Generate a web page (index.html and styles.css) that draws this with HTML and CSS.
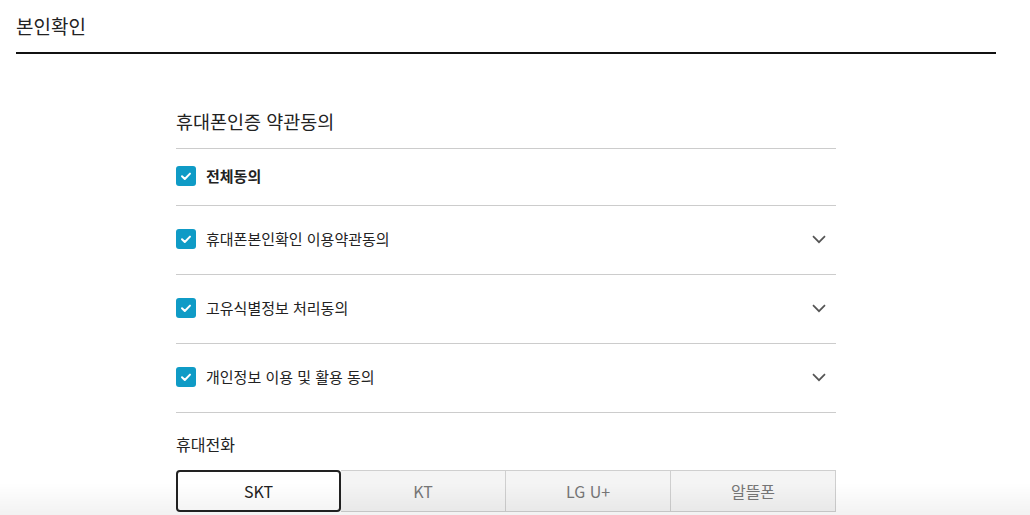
FILE: index.html
```html
<!DOCTYPE html>
<html lang="ko">
<head>
<meta charset="utf-8">
<link rel="stylesheet" href="styles.css">
</head>
<body>
<header class="page-head">
  <h1 class="page-title">본인확인</h1>
</header>
<main class="content">
  <h2 class="section-title">휴대폰인증 약관동의</h2>
  <div class="agree-all">
    <span class="check"><svg viewBox="0 0 20 20" width="20" height="20"><path d="M6 10.2l2.8 2.8 5.2-5.4" fill="none" stroke="#fff" stroke-width="2" stroke-linecap="round" stroke-linejoin="round"/></svg></span>
    <span class="agree-all-label">전체동의</span>
  </div>
  <div class="agree-row">
    <span class="check"><svg viewBox="0 0 20 20" width="20" height="20"><path d="M6 10.2l2.8 2.8 5.2-5.4" fill="none" stroke="#fff" stroke-width="2" stroke-linecap="round" stroke-linejoin="round"/></svg></span>
    <span class="agree-label">휴대폰본인확인 이용약관동의</span>
    <svg class="chev" viewBox="0 0 14 9" width="14" height="9"><path d="M1 1.2l6 6 6-6" fill="none" stroke="#555" stroke-width="1.7"/></svg>
  </div>
  <div class="agree-row">
    <span class="check"><svg viewBox="0 0 20 20" width="20" height="20"><path d="M6 10.2l2.8 2.8 5.2-5.4" fill="none" stroke="#fff" stroke-width="2" stroke-linecap="round" stroke-linejoin="round"/></svg></span>
    <span class="agree-label">고유식별정보 처리동의</span>
    <svg class="chev" viewBox="0 0 14 9" width="14" height="9"><path d="M1 1.2l6 6 6-6" fill="none" stroke="#555" stroke-width="1.7"/></svg>
  </div>
  <div class="agree-row">
    <span class="check"><svg viewBox="0 0 20 20" width="20" height="20"><path d="M6 10.2l2.8 2.8 5.2-5.4" fill="none" stroke="#fff" stroke-width="2" stroke-linecap="round" stroke-linejoin="round"/></svg></span>
    <span class="agree-label">개인정보 이용 및 활용 동의</span>
    <svg class="chev" viewBox="0 0 14 9" width="14" height="9"><path d="M1 1.2l6 6 6-6" fill="none" stroke="#555" stroke-width="1.7"/></svg>
  </div>
  <h3 class="field-label">휴대전화</h3>
  <div class="carriers">
    <button class="carrier selected">SKT</button>
    <button class="carrier">KT</button>
    <button class="carrier">LG U+</button>
    <button class="carrier">알뜰폰</button>
  </div>
</main>
<div class="bottom-fade"></div>
</body>
</html>
```

FILE: styles.css
```css
* { box-sizing: border-box; }
html, body { margin: 0; padding: 0; background: #fff; }
body {
  font-family: "Noto Sans CJK KR", "Noto Sans", sans-serif;
  color: #222;
  overflow: hidden;
}
.page-head {
  margin-left: 16px;
  width: 980px;
  height: 54px;
  border-bottom: 2px solid #111;
  display: flex;
  align-items: center;
}
.page-title {
  margin: 0 0 1px 0;
  font-size: 19px;
  font-weight: 400;
  line-height: 1;
  color: #222;
}
.content {
  margin-left: 176px;
  width: 660px;
  padding-top: 52px;
}
.section-title {
  margin: 0;
  height: 43px;
  font-size: 18.5px;
  font-weight: 400;
  line-height: 30px;
  color: #222;
  border-bottom: 1px solid #ccc;
}
.check {
  width: 20px;
  height: 20px;
  border-radius: 3px;
  background: #0f9bc6;
  display: inline-flex;
  flex: none;
  margin-top: -2px;
}
.agree-all {
  height: 57px;
  display: flex;
  align-items: center;
  gap: 10px;
  border-bottom: 1px solid #ccc;
}
.agree-all-label {
  font-size: 15px;
  font-weight: 700;
  color: #222;
  margin-top: -4px;
}
.agree-row {
  height: 69px;
  display: flex;
  align-items: center;
  gap: 10px;
  border-bottom: 1px solid #ccc;
  padding-right: 10px;
}
.agree-label {
  flex: 1;
  font-size: 15px;
  color: #222;
  margin-top: -3px;
}
.chev { flex: none; margin-top: -1px; }
.field-label {
  margin: 0;
  padding-top: 19px;
  height: 57px;
  font-size: 16px;
  font-weight: 400;
  line-height: 24px;
  color: #222;
}
.carriers {
  display: grid;
  grid-template-columns: repeat(4, 1fr);
  height: 42px;
}
.carrier {
  font-family: "Noto Sans CJK KR", "Noto Sans", sans-serif;
  font-size: 16px;
  color: #777;
  background: #f4f4f4;
  border: 1px solid #cfcfcf;
  border-left: none;
  margin: 0;
  padding: 0;
  cursor: pointer;
}
.carrier.selected {
  color: #222;
  background: #fff;
  border: 2px solid #222;
  border-radius: 4px;
}
.bottom-fade {
  position: fixed;
  left: 0;
  right: 0;
  bottom: 0;
  height: 32px;
  background: linear-gradient(to bottom, rgba(0,0,0,0), rgba(0,0,0,0.05));
  pointer-events: none;
}
```
